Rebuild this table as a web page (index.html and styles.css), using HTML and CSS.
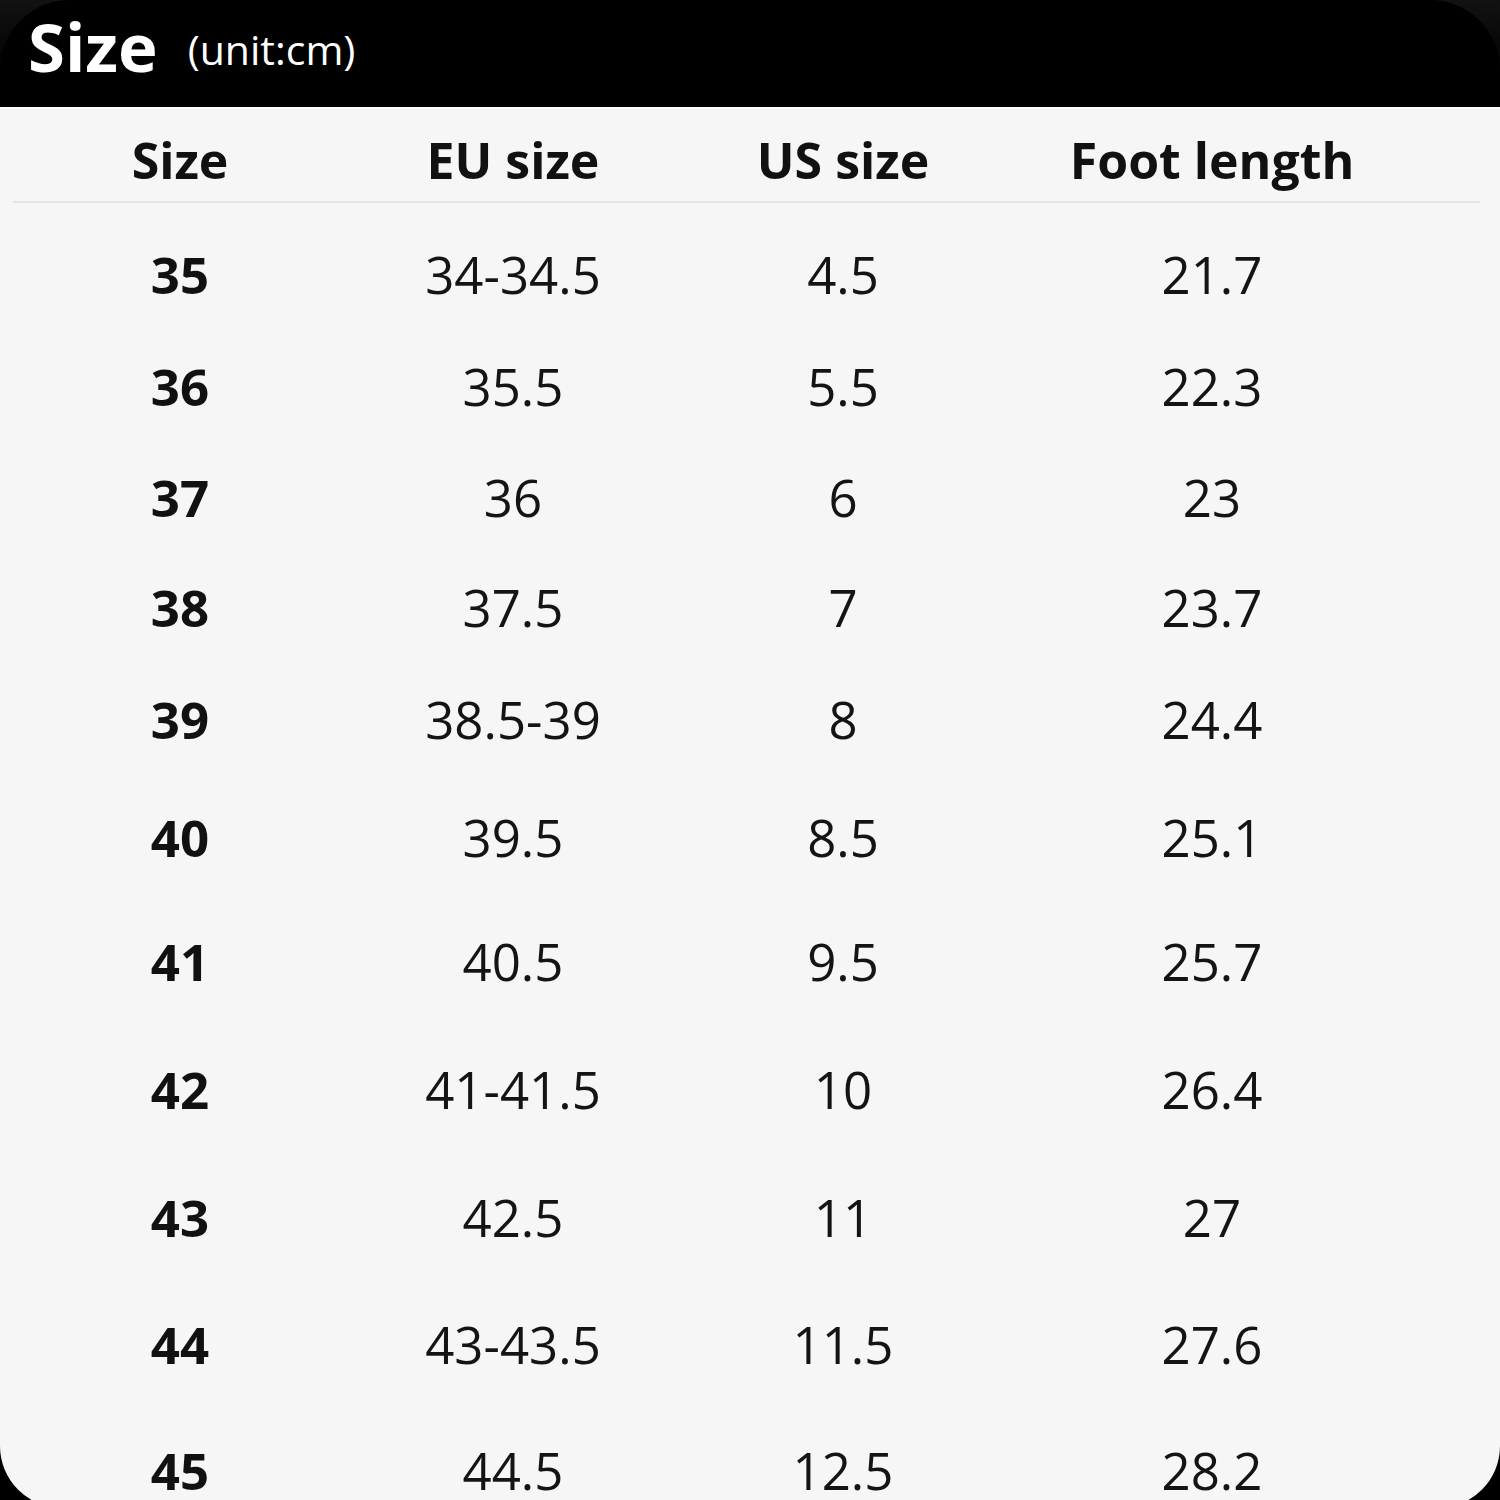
FILE: index.html
```html
<!DOCTYPE html>
<html lang="en">
<head>
<meta charset="utf-8">
<title>Size chart</title>
<link rel="stylesheet" href="styles.css">
</head>
<body>
<div class="page">
  <header class="top">
    <span class="title">Size</span><span class="unit">(unit:cm)</span>
  </header>
  <main class="panel">
    <div class="thead">
      <div>Size</div><div>EU size</div><div>US size</div><div>Foot length</div>
    </div>
    <div class="tbody">
      <div class="c1">35</div><div>34-34.5</div><div>4.5</div><div>21.7</div>
      <div class="c1">36</div><div>35.5</div><div>5.5</div><div>22.3</div>
      <div class="c1">37</div><div>36</div><div>6</div><div>23</div>
      <div class="c1">38</div><div>37.5</div><div>7</div><div>23.7</div>
      <div class="c1">39</div><div>38.5-39</div><div>8</div><div>24.4</div>
      <div class="c1">40</div><div>39.5</div><div>8.5</div><div>25.1</div>
      <div class="c1">41</div><div>40.5</div><div>9.5</div><div>25.7</div>
      <div class="c1">42</div><div>41-41.5</div><div>10</div><div>26.4</div>
      <div class="c1">43</div><div>42.5</div><div>11</div><div>27</div>
      <div class="c1">44</div><div>43-43.5</div><div>11.5</div><div>27.6</div>
      <div class="c1">45</div><div>44.5</div><div>12.5</div><div>28.2</div>
    </div>
  </main>
</div>
</body>
</html>
```

FILE: styles.css
```css
html, body {
  margin: 0;
  padding: 0;
  height: 1500px;
  overflow: hidden;
}
body {
  background: linear-gradient(to bottom, #121212 0, #000 80px);
  font-family: "Open Sans", "Noto Sans", sans-serif;
}
.page {
  width: 1500px;
}
.top {
  height: 107px;
  box-sizing: border-box;
  background: #000;
  border-radius: 70px 70px 0 0;
  padding-left: 28px;
  line-height: 93px;
  color: #fff;
  white-space: nowrap;
  overflow: hidden;
}
.title {
  font-size: 67px;
  font-weight: 700;
}
.unit {
  font-size: 41px;
  font-weight: 400;
  line-height: 1;
  margin-left: 30px;
  vertical-align: 7px;
}
.panel {
  background: #f6f6f6;
  border-top: 2px solid #fdfdfd;
  height: 1401px;
  border-radius: 0 0 62px 62px;
  padding: 0 20px 0 13px;
  box-sizing: border-box;
  color: #141414;
}
.thead,
.tbody {
  display: grid;
  grid-template-columns: 334px 332px 328px 410px;
  text-align: center;
}
.thead {
  font-size: 50px;
  font-weight: 700;
  line-height: 68px;
  padding: 17px 0 7px;
  border-bottom: 2px solid #e4e4e4;
  color: #111;
}
.tbody {
  font-size: 51px;
  font-weight: 400;
  padding-top: 14px;
  grid-template-rows: 113px 112px 110px 110px 114px 121px 127px 129px 128px 126px 125px;
  align-items: center;
  line-height: 68px;
}
.tbody .c1 {
  font-weight: 700;
  color: #111;
}
```
